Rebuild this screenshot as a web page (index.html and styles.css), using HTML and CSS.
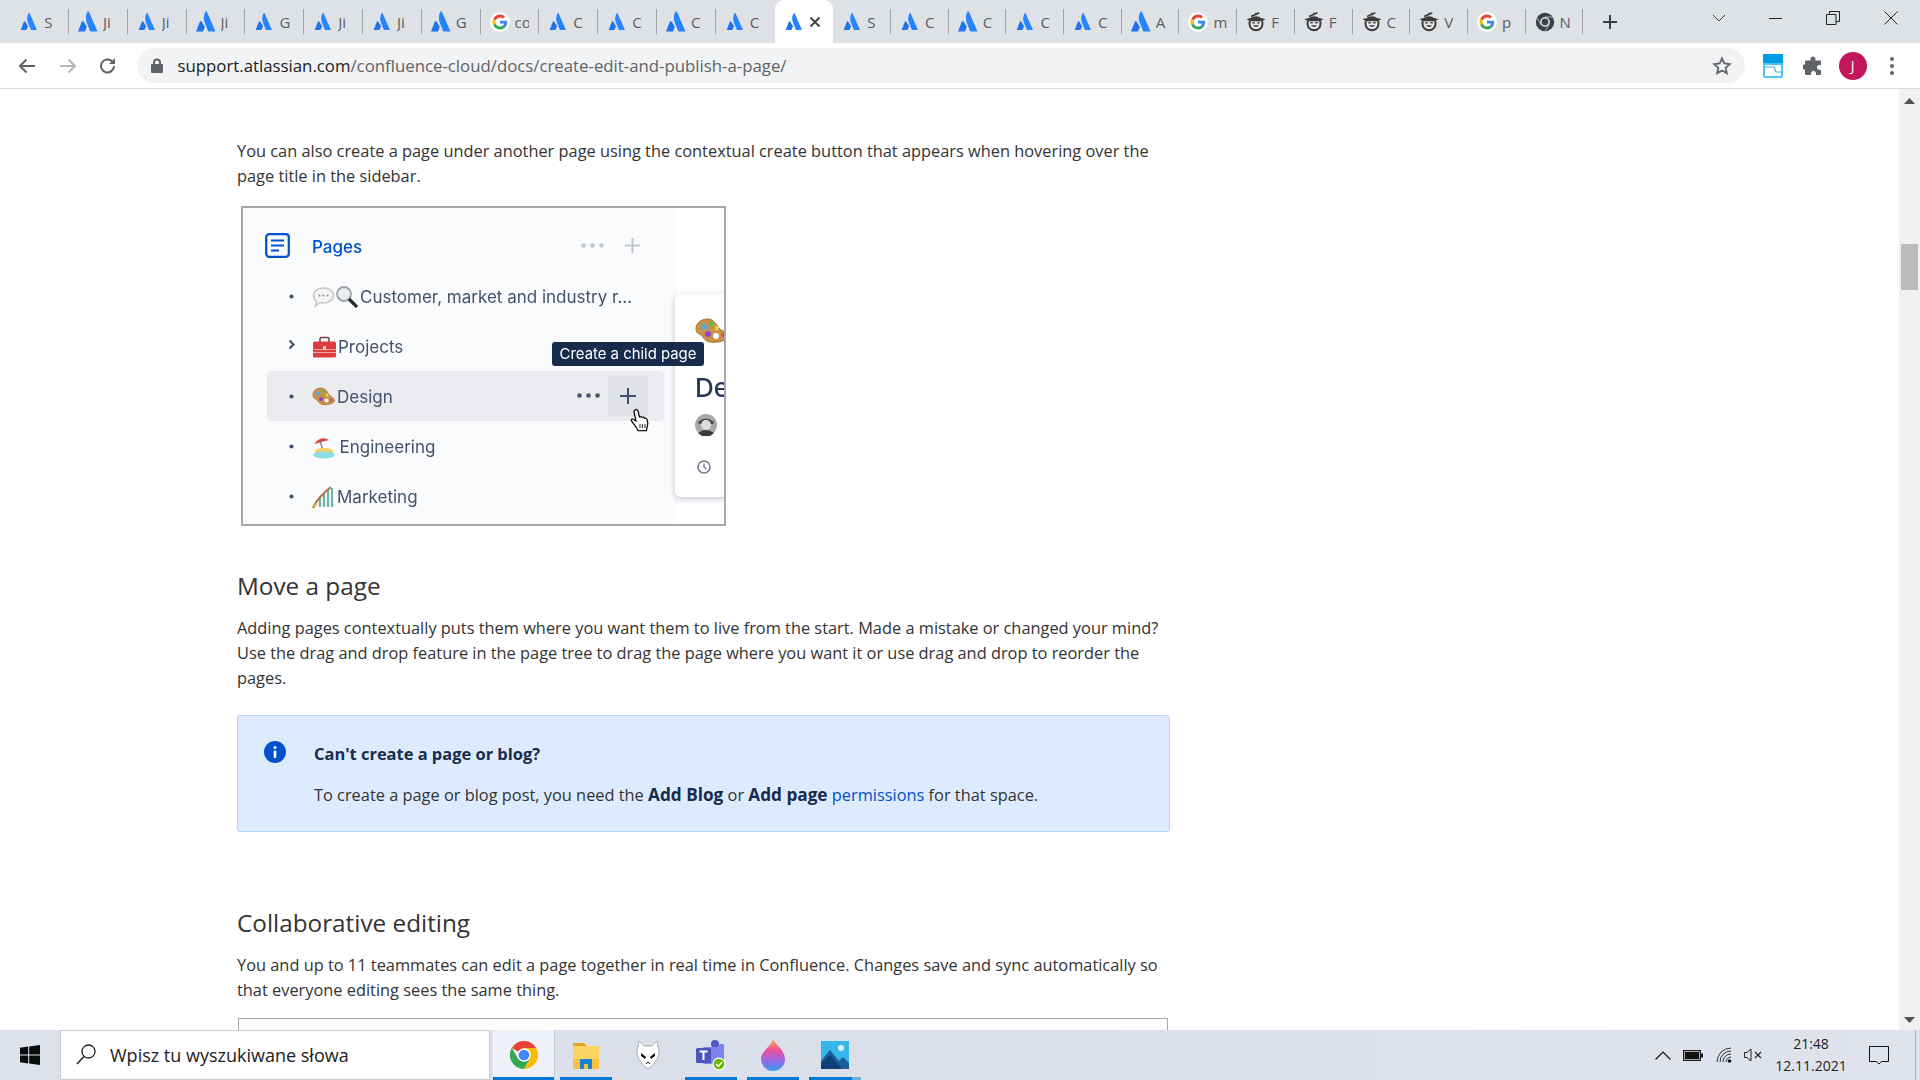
FILE: index.html
```html
<!DOCTYPE html>
<html lang="en">
<head>
<meta charset="utf-8">
<title>Create, edit, and publish a page</title>
<link rel="stylesheet" href="styles.css">
</head>
<body>
<svg class="defs" width="0" height="0" aria-hidden="true">
  <symbol id="atl" viewBox="0 0 24 24">
    <path fill="#2684ff" d="M11.6 1.6c-2.4 4-2.3 8.300-.3 12.500L14.300 21.500h7.200L12.900 1.800c-.4-.7-1-.7-1.300-.2z"/>
    <path fill="#1f74ec" d="M7.200 11.300c-.4-.5-1-.4-1.300.2L2 21.500h7l1.800-4.400c-1-2.100-2.100-4-3.600-5.800z"/>
  </symbol>
  <symbol id="goo" viewBox="-8 -8 64 64">
    <circle cx="24" cy="24" r="32" fill="#fff"/>
    <path fill="#EA4335" d="M24 9.500c3.540 0 6.710 1.220 9.210 3.600l6.850-6.850C35.900 2.380 30.470 0 24 0 14.620 0 6.510 5.380 2.560 13.220l7.980 6.190C12.430 13.720 17.740 9.500 24 9.500z"/>
    <path fill="#4285F4" d="M46.980 24.550c0-1.570-.15-3.090-.38-4.550H24v9.020h12.940c-.58 2.960-2.260 5.480-4.780 7.180l7.730 6c4.510-4.180 7.090-10.360 7.090-17.650z"/>
    <path fill="#FBBC05" d="M10.530 28.590c-.48-1.450-.76-2.990-.76-4.590s.27-3.140.76-4.590l-7.980-6.190C.92 16.460 0 20.120 0 24c0 3.880.92 7.540 2.560 10.780l7.970-6.190z"/>
    <path fill="#34A853" d="M24 48c6.480 0 11.930-2.130 15.890-5.810l-7.730-6c-2.150 1.450-4.920 2.300-8.160 2.300-6.260 0-11.570-4.220-13.470-9.910l-7.980 6.190C6.510 42.620 14.620 48 24 48z"/>
  </symbol>
  <symbol id="hat" viewBox="0 0 24 24">
    <circle cx="12" cy="14" r="9" fill="#3c3c3c"/>
    <path d="M1 8.500c7-2.500 15-2.500 22 0-1 1.500-2 1.700-3 1.700H4c-1 0-2-.2-3-1.700z" fill="#3c3c3c"/>
    <path d="M6 5.500L16 1M12 4V1" stroke="#3c3c3c" stroke-width="2" fill="none"/>
    <path d="M5.500 11h13v3c0 4-3 6.500-6.500 6.500S5.500 18 5.500 14z" fill="#e9e9e9"/>
    <path d="M7.500 13.500q1.500-1.500 3 0M13.500 13.500q1.500-1.500 3 0" stroke="#3c3c3c" stroke-width="1.300" fill="none"/>
    <path d="M8 16q4 4 8 0z" fill="#3c3c3c"/>
  </symbol>
  <symbol id="chr" viewBox="0 0 24 24">
    <circle cx="12" cy="12" r="11" fill="#3c4043"/>
    <circle cx="12" cy="12" r="6" fill="#c9ccd1"/>
    <circle cx="12" cy="12" r="3.800" fill="#3c4043"/>
    <path d="M12 6h9.500M7 15L2.500 7M17 15l-5 8" stroke="#c9ccd1" stroke-width="1"/>
  </symbol>
  <symbol id="bullet" viewBox="0 0 6 6"><circle cx="3" cy="3" r="2.500" fill="#42526e"/></symbol>
</svg>

<div class="tabstrip">
  <div class="tab"><div class="tab-in"><svg class="fav"><use href="#atl"/></svg><span class="let">S</span></div></div>
  <div class="tab"><div class="tab-in"><svg class="fav big"><use href="#atl"/></svg><span class="let">Ji</span></div></div>
  <div class="tab"><div class="tab-in"><svg class="fav"><use href="#atl"/></svg><span class="let">Ji</span></div></div>
  <div class="tab"><div class="tab-in"><svg class="fav big"><use href="#atl"/></svg><span class="let">Ji</span></div></div>
  <div class="tab"><div class="tab-in"><svg class="fav"><use href="#atl"/></svg><span class="let">G</span></div></div>
  <div class="tab"><div class="tab-in"><svg class="fav"><use href="#atl"/></svg><span class="let">Ji</span></div></div>
  <div class="tab"><div class="tab-in"><svg class="fav"><use href="#atl"/></svg><span class="let">Ji</span></div></div>
  <div class="tab"><div class="tab-in"><svg class="fav big"><use href="#atl"/></svg><span class="let">G</span></div></div>
  <div class="tab"><div class="tab-in"><svg class="fav"><use href="#goo"/></svg><span class="let">co</span></div></div>
  <div class="tab"><div class="tab-in"><svg class="fav"><use href="#atl"/></svg><span class="let">C</span></div></div>
  <div class="tab"><div class="tab-in"><svg class="fav"><use href="#atl"/></svg><span class="let">C</span></div></div>
  <div class="tab"><div class="tab-in"><svg class="fav big"><use href="#atl"/></svg><span class="let">C</span></div></div>
  <div class="tab"><div class="tab-in no-sep"><svg class="fav"><use href="#atl"/></svg><span class="let">C</span></div></div>
  <div class="tab active"><div class="tab-in no-sep"><svg class="fav"><use href="#atl"/></svg>
    <svg class="tab-x" viewBox="0 0 12 12"><path d="M1.500 1.500l9 9M10.500 1.500l-9 9" stroke="#3c4043" stroke-width="1.800"/></svg></div></div>
  <div class="tab"><div class="tab-in"><svg class="fav"><use href="#atl"/></svg><span class="let">S</span></div></div>
  <div class="tab"><div class="tab-in"><svg class="fav"><use href="#atl"/></svg><span class="let">C</span></div></div>
  <div class="tab"><div class="tab-in"><svg class="fav big"><use href="#atl"/></svg><span class="let">C</span></div></div>
  <div class="tab"><div class="tab-in"><svg class="fav"><use href="#atl"/></svg><span class="let">C</span></div></div>
  <div class="tab"><div class="tab-in"><svg class="fav"><use href="#atl"/></svg><span class="let">C</span></div></div>
  <div class="tab"><div class="tab-in"><svg class="fav big"><use href="#atl"/></svg><span class="let">A</span></div></div>
  <div class="tab"><div class="tab-in"><svg class="fav"><use href="#goo"/></svg><span class="let">m</span></div></div>
  <div class="tab"><div class="tab-in"><svg class="fav"><use href="#hat"/></svg><span class="let">F</span></div></div>
  <div class="tab"><div class="tab-in"><svg class="fav"><use href="#hat"/></svg><span class="let">F</span></div></div>
  <div class="tab"><div class="tab-in"><svg class="fav"><use href="#hat"/></svg><span class="let">C</span></div></div>
  <div class="tab"><div class="tab-in"><svg class="fav"><use href="#hat"/></svg><span class="let">V</span></div></div>
  <div class="tab"><div class="tab-in"><svg class="fav"><use href="#goo"/></svg><span class="let">p</span></div></div>
  <div class="tab"><div class="tab-in"><svg class="fav"><use href="#chr"/></svg><span class="let">N</span></div></div>
  <svg class="newtab" viewBox="0 0 14 14"><path d="M7 0v14M0 7h14" stroke="#3c4043" stroke-width="2"/></svg>
  <div class="win-btns">
    <div class="win chev"><svg width="14" height="8" viewBox="0 0 14 8"><path d="M1 1l6 6 6-6" fill="none" stroke="#3c4043" stroke-width="1"/></svg></div>
    <div class="win"><svg width="16" height="14" viewBox="0 0 16 14"><path d="M2 7.500h13" stroke="#222" stroke-width="1"/></svg></div>
    <div class="win"><svg width="14" height="14" viewBox="0 0 14 14"><path d="M.5 3.500h9.500v10H.5zM3.500 3.500V.5h10v10H10" fill="none" stroke="#222" stroke-width="1"/></svg></div>
    <div class="win"><svg width="14" height="14" viewBox="0 0 14 14"><path d="M.5.5l13 13M13.500.5l-13 13" stroke="#222" stroke-width="1"/></svg></div>
  </div>
</div>

<div class="toolbar">
  <div class="tb-btn"><svg width="18" height="16" viewBox="0 0 18 16"><path d="M17 8H2M8.500 1.500L2 8l6.500 6.500" fill="none" stroke="#5f6368" stroke-width="2"/></svg></div>
  <div class="tb-btn"><svg width="18" height="16" viewBox="0 0 18 16"><path d="M1 8h15M9.500 1.500L16 8l-6.500 6.500" fill="none" stroke="#b4b6b9" stroke-width="2"/></svg></div>
  <div class="tb-btn"><svg width="18" height="18" viewBox="0 0 18 18"><path d="M15 9a6.500 6.500 0 1 1-1.900-4.600" fill="none" stroke="#5f6368" stroke-width="2"/><path d="M16 1v6h-6z" fill="#5f6368"/></svg></div>
  <div class="omnibox">
    <svg class="lock" width="12" height="15" viewBox="0 0 12 15"><path d="M2 6V4.500a4 4 0 0 1 8 0V6h1a1 1 0 0 1 1 1v7a1 1 0 0 1-1 1H1a1 1 0 0 1-1-1V7a1 1 0 0 1 1-1zm2 0h4V4.500a2 2 0 0 0-4 0z" fill="#5f6368"/></svg>
    <span class="url"><span class="host">support.atlassian.com</span>/confluence-cloud/docs/create-edit-and-publish-a-page/</span>
    <svg class="star" width="20" height="20" viewBox="0 0 20 20"><path d="M10 2.500l2.300 5 5.400.6-4 3.700 1.100 5.400L10 14.500l-4.800 2.700 1.100-5.400-4-3.700 5.400-.6z" fill="none" stroke="#5f6368" stroke-width="1.800"/></svg>
  </div>
  <div class="tb-btn ext"><svg width="20" height="24" viewBox="0 0 20 24"><rect width="20" height="24" rx="2" fill="#4fc3f7"/><rect width="20" height="9" y="0" fill="#039be5"/><rect x="2" y="11" width="16" height="11" fill="#fff"/><path d="M2 13h9l2 5h5" fill="none" stroke="#4fa8d8" stroke-width="1.200"/></svg></div>
  <div class="tb-btn"><svg width="20" height="20" viewBox="0 0 20 20"><path d="M8 1.500a2.500 2.500 0 0 1 4.500 1.500V4.500H17a1 1 0 0 1 1 1V9h-1.500a2.500 2.500 0 0 0 0 5H18v4a1 1 0 0 1-1 1h-4v-1.500a2.500 2.500 0 0 0-5 0V19H3a1 1 0 0 1-1-1v-4.500H.5a2.500 2.500 0 0 1 0-5H2V5.500a1 1 0 0 1 1-1h4.500V3A2 2 0 0 1 8 1.500z" fill="#5f6368"/></svg></div>
  <div class="tb-btn narrow"><span class="avatar">J</span></div>
  <div class="tb-btn narrow"><svg width="4" height="18" viewBox="0 0 4 18"><circle cx="2" cy="2" r="2" fill="#5f6368"/><circle cx="2" cy="9" r="2" fill="#5f6368"/><circle cx="2" cy="16" r="2" fill="#5f6368"/></svg></div>
</div>

<div class="viewport">
  <main class="page">
    <p class="para">You can also create a page under another page using the contextual create button that appears when hovering over the page title in the sidebar.</p>

    <div class="shot">
      <div class="shot-in">
        <div class="side">
          <div class="row">
            <svg class="pages-ico" width="25" height="25" viewBox="0 0 25 25"><rect x="1.200" y="1.200" width="22.600" height="22.600" rx="3" fill="none" stroke="#0052cc" stroke-width="2.200"/><path d="M6 7.500h13M6 12.500h13M6 17.500h8" stroke="#0052cc" stroke-width="2"/></svg>
            <span class="pages-label">Pages</span>
            <svg class="dots" width="23" height="5" viewBox="0 0 23 5"><circle cx="2.500" cy="2.500" r="2.300" fill="#c1c7d0"/><circle cx="11.500" cy="2.500" r="2.300" fill="#c1c7d0"/><circle cx="20.500" cy="2.500" r="2.300" fill="#c1c7d0"/></svg>
            <div class="plus-slot"><svg width="15" height="15" viewBox="0 0 15 15"><path d="M7.500 0v15M0 7.500h15" stroke="#c1c7d0" stroke-width="2"/></svg></div>
          </div>
          <div class="row item">
            <svg class="bul" width="5" height="5"><use href="#bullet"/></svg>
            <svg class="emo" width="23" height="22" viewBox="0 0 23 22"><path d="M11.500 2c5.500 0 10 3 10 7.500S17 17 11.500 17c-1.200 0-2.400-.2-3.500-.5L3.500 20l1-5C2.500 13.500 1.500 11.700 1.500 9.500 1.500 5 6 2 11.500 2z" fill="#f4f5f5" stroke="#c5c9c9" stroke-width="1.500"/><circle cx="7.500" cy="9.500" r="1" fill="#8c9095"/><circle cx="11.500" cy="9.500" r="1" fill="#8c9095"/><circle cx="15.500" cy="9.500" r="1" fill="#8c9095"/></svg>
            <svg class="emo" width="23" height="22" viewBox="0 0 23 22"><circle cx="9" cy="8" r="7" fill="#e9eef2" stroke="#9aa0a6" stroke-width="1.800"/><path d="M14 13l8 8" stroke="#2b2b2b" stroke-width="3.200"/></svg>
            <span class="item-t">Customer, market and industry r...</span>
          </div>
          <div class="row item">
            <svg class="arrow" width="8" height="11" viewBox="0 0 8 11"><path d="M1.500 1.500l4 4-4 4" fill="none" stroke="#42526e" stroke-width="2.200"/></svg>
            <svg class="emo" width="23" height="22" viewBox="0 0 23 22"><path d="M7 6V3a1.500 1.500 0 0 1 1.500-1.500h6A1.500 1.500 0 0 1 16 3v3" fill="none" stroke="#70474a" stroke-width="1.600"/><rect y="5.500" width="23" height="16" rx="1.500" fill="#dc3d3f"/><path d="M0 13.500h23M0 16.500h23" stroke="#f0a8a8" stroke-width="1"/><rect x="10" y="10" width="3" height="4" fill="#e8c9c9"/></svg>
            <span class="item-t">Projects</span>
          </div>
          <div class="row item hover">
            <svg class="bul" width="5" height="5"><use href="#bullet"/></svg>
            <svg class="emo" width="23" height="22" viewBox="0 0 23 22"><path d="M9 2C4 2 1 5 1 9c0 3 2 3.500 3.500 4.500S7 18 11 18.500c5 .6 11.500-1 11.500-4S18.500 11 16.500 8 13 2 9 2z" fill="#c9914a" stroke="#a66e2c" stroke-width=".8"/><circle cx="6" cy="7.500" r="2" fill="#55a8e0"/><circle cx="11" cy="5.500" r="1.800" fill="#63b84a"/><circle cx="15" cy="9" r="1.600" fill="#e9d34b"/><circle cx="9" cy="13" r="2" fill="#8d45c9"/><circle cx="14.500" cy="14.500" r="2" fill="#fff"/><circle cx="19" cy="14" r="1.500" fill="#e05040"/></svg>
            <span class="item-t">Design</span>
            <svg class="dots dark" width="23" height="5" viewBox="0 0 23 5"><circle cx="2.500" cy="2.500" r="2.300" fill="#42526e"/><circle cx="11.500" cy="2.500" r="2.300" fill="#42526e"/><circle cx="20.500" cy="2.500" r="2.300" fill="#42526e"/></svg>
            <div class="plus-box"><svg width="16" height="16" viewBox="0 0 16 16"><path d="M8 0v16M0 8h16" stroke="#42526e" stroke-width="2"/></svg></div>
          </div>
          <div class="row item">
            <svg class="bul" width="5" height="5"><use href="#bullet"/></svg>
            <svg class="emo wide" width="23" height="24" viewBox="0 0 23 24"><path d="M2 9Q9 0 17 5z" fill="#e2443a"/><path d="M8 5L11 16" stroke="#777" stroke-width="1.200"/><ellipse cx="12" cy="16.500" rx="9.500" ry="3.500" fill="#f5cf6a"/><ellipse cx="12" cy="20" rx="11" ry="3.500" fill="#8adfe6"/></svg>
            <span class="item-t">Engineering</span>
          </div>
          <div class="row item">
            <svg class="bul" width="5" height="5"><use href="#bullet"/></svg>
            <svg class="emo" width="23" height="24" viewBox="0 0 23 24"><path d="M8 22V13M12 22V9M16 22V5M20 22V3" stroke="#6cb5a9" stroke-width="2.200"/><path d="M1 23Q6 12 19 2" fill="none" stroke="#b0713d" stroke-width="2.200"/><path d="M2 22l3-4" stroke="#d9c54a" stroke-width="2"/></svg>
            <span class="item-t">Marketing</span>
          </div>
        </div>
        <div class="rhs">
          <div class="card">
            <svg class="card-palette" width="34" height="27" viewBox="0 0 34 27"><path d="M13 1C6 1 1 5 1 11c0 4 3 5 5 6s3 6 9 7c7 1 18-1 18-6s-6-4-9-8-6-9-11-9z" fill="#c9914a" stroke="#a66e2c"/><circle cx="9" cy="9" r="3" fill="#55a8e0"/><circle cx="16" cy="6" r="2.600" fill="#63b84a"/><circle cx="22" cy="10" r="2.200" fill="#e9d34b"/><circle cx="13" cy="16" r="3" fill="#8d45c9"/><circle cx="21" cy="18" r="3" fill="#fff"/><circle cx="28" cy="17" r="2.200" fill="#e05040"/></svg>
            <span class="card-de">De</span>
            <svg class="card-av" width="22" height="22" viewBox="0 0 22 22"><circle cx="11" cy="11" r="11" fill="#a8a8a8"/><path d="M3 8q8-7 16 0l-1 2H4z" fill="#4a4a4a"/><circle cx="11" cy="11" r="5" fill="#dcdcdc"/><path d="M3 19q8-6 16 0l-4 3H7z" fill="#3a3a3a"/></svg>
            <svg class="card-clock" width="14" height="14" viewBox="0 0 14 14"><circle cx="7" cy="7" r="6" fill="none" stroke="#6b778c" stroke-width="1.500"/><path d="M7 3.500V7l2.500 2" fill="none" stroke="#6b778c" stroke-width="1.300"/></svg>
          </div>
        </div>
        <div class="tooltip">Create a child page</div>
        <svg class="hand" width="20" height="25" viewBox="0 0 20 25"><path d="M5 2c1-1 2.500-.5 3 1l1.500 6c1-.5 2-.5 2.500.5 1-.5 2-.3 2.500.7 1-.3 2 0 2.500 1 .8 2 1 5 .3 7.500l-1 4H8L6 19 1.500 13c-.8-1.500.8-2.500 2-1.500L6 13 4 4c-.2-.8.300-1.500 1-2z" fill="#fff" stroke="#111" stroke-width="1.300"/><path d="M10 16v4M12.500 16v4M15 16v4" stroke="#333" stroke-width="1.100"/></svg>
      </div>
    </div>

    <h2 class="h-move">Move a page</h2>
    <p class="para">Adding pages contextually puts them where you want them to live from the start. Made a mistake or changed your mind? Use the drag and drop feature in the page tree to drag the page where you want it or use drag and drop to reorder the pages.</p>

    <section class="callout">
      <svg class="info" width="22" height="22" viewBox="0 0 22 22"><circle cx="11" cy="11" r="11" fill="#0052cc"/><circle cx="11" cy="6.500" r="1.500" fill="#fff"/><rect x="9.700" y="9.500" width="2.600" height="7.500" rx="1" fill="#fff"/></svg>
      <div class="callout-body">
        <h3 class="callout-h">Can't create a page or blog?</h3>
        <p class="callout-p">To create a page or blog post, you need the <strong>Add Blog</strong> or <strong>Add page</strong> <a class="link">permissions</a> for that space.</p>
      </div>
    </section>

    <h2 class="h-collab">Collaborative editing</h2>
    <p class="para">You and up to 11 teammates can edit a page together in real time in Confluence. Changes save and sync automatically so that everyone editing sees the same thing.</p>
    <div class="shot2"></div>
  </main>
  <div class="scrollbar">
    <svg class="sb-up" width="11" height="6" viewBox="0 0 11 6"><path d="M5.500 0L11 6H0z" fill="#505050"/></svg>
    <div class="sb-thumb"></div>
    <svg class="sb-down" width="11" height="6" viewBox="0 0 11 6"><path d="M5.500 6L11 0H0z" fill="#505050"/></svg>
  </div>
</div>

<div class="taskbar">
  <div class="start"><svg width="20" height="20" viewBox="0 0 20 20"><path d="M0 2.800l8.200-1.200v7.900H0zM9.200 1.400L20 0v9.500H9.200zM0 10.500h8.200v7.900L0 17.200zM9.200 10.500H20V20L9.200 18.600z" fill="#0a0a0a"/></svg></div>
  <div class="search">
    <svg width="22" height="24" viewBox="0 0 22 24"><circle cx="13.500" cy="8.500" r="6.500" fill="none" stroke="#222" stroke-width="1.300"/><path d="M9 13.500L2 21" stroke="#222" stroke-width="1.500"/></svg>
    <span class="search-t">Wpisz tu wyszukiwane słowa</span>
  </div>
  <div class="apps">
    <div class="app on">
      <svg width="28" height="28" viewBox="0 0 24 24"><path fill="#ea4335" d="M12 12L1.600 6A12 12 0 0 1 22.400 6H12z"/><path fill="#34a853" d="M1.600 6A12 12 0 0 0 12 24L17.200 15H6.800z"/><path fill="#fbbc05" d="M22.400 6A12 12 0 0 1 12 24L17.200 15 12 6z"/><circle cx="12" cy="12" r="5.800" fill="#fff"/><circle cx="12" cy="12" r="4.600" fill="#4285f4"/></svg>
      <i class="bar full"></i>
    </div>
    <div class="app">
      <svg width="28" height="30" viewBox="0 0 28 30"><path d="M1 3h11l3 3H1z" fill="#e0a41f"/><rect x="1" y="6" width="26" height="23" fill="#fcd462"/><rect x="1" y="19" width="26" height="10" fill="#f5c242"/><path d="M8 29v-9a1 1 0 0 1 1-1h10a1 1 0 0 1 1 1v9h-4v-5h-4v5z" fill="#1b7fd1"/></svg>
      <i class="bar"></i>
    </div>
    <div class="app">
      <svg width="24" height="30" viewBox="0 0 24 30"><path d="M3 1l5 5h8l5-5 2 9c1 7-5 15-11 19C6 25 0 17 1 10z" fill="#fff" stroke="#9a9a9a" stroke-width=".8"/><path d="M5 13l5 4-1 2-4-3zM19 13l-5 4 1 2 4-3z" fill="#111"/><path d="M10 24l2-2 2 2" stroke="#111" fill="none"/></svg>
      <i class="bar none"></i>
    </div>
    <div class="app">
      <svg width="30" height="32" viewBox="0 0 30 32"><circle cx="19" cy="5" r="4" fill="#5059c9"/><circle cx="25.500" cy="7.500" r="2.800" fill="#7b83eb"/><rect x="6" y="8" width="22" height="17" rx="3" fill="#7b83eb"/><rect y="9" width="15" height="15" rx="1.500" fill="#4b53bc"/><path d="M3.500 12.500h8M7.500 12.500v8.500" stroke="#fff" stroke-width="2"/><circle cx="23" cy="25" r="6.500" fill="#fff"/><circle cx="23" cy="25" r="5.300" fill="#6bb700"/><path d="M20 25l2.300 2.300 3.700-4" fill="none" stroke="#fff" stroke-width="1.500"/></svg>
      <i class="bar"></i>
    </div>
    <div class="app">
      <svg width="28" height="32" viewBox="0 0 28 32"><defs><linearGradient id="flame" x1="0" y1="0" x2="0" y2="1"><stop offset="0" stop-color="#f7b733"/><stop offset=".35" stop-color="#ec4fa0"/><stop offset=".7" stop-color="#8e6ae8"/><stop offset="1" stop-color="#3aa0e8"/></linearGradient></defs><path d="M14 0c2 5 12 11 12 20a12 12 0 0 1-24 0C2 12 12 8 14 0z" fill="url(#flame)"/></svg>
      <i class="bar"></i>
    </div>
    <div class="app">
      <svg width="28" height="28" viewBox="0 0 28 28"><rect width="28" height="28" fill="#35b7ea"/><circle cx="20" cy="7" r="3" fill="#d8f3fc"/><path d="M0 20l9-11 9 11 4-4 6 6v6H0z" fill="#1b5e9e"/><path d="M0 28v-6l9-8 12 14z" fill="#0f3f75"/></svg>
      <i class="bar part"></i>
    </div>
  </div>
  <div class="tray">
    <div class="tray-i w30"><svg width="16" height="9" viewBox="0 0 16 9"><path d="M.5 8.500L8 1l7.500 7.500" fill="none" stroke="#111" stroke-width="1.200"/></svg></div>
    <div class="tray-i w30"><svg width="20" height="11" viewBox="0 0 20 11"><rect x=".7" y=".7" width="16.600" height="9.600" fill="#fff" stroke="#111" stroke-width="1.300"/><rect x="2" y="2" width="14" height="7" fill="#111"/><rect x="18" y="3.500" width="2" height="4" fill="#111"/></svg></div>
    <div class="tray-i w31"><svg width="16" height="16" viewBox="0 0 16 16"><path d="M1 15A14 14 0 0 1 15 1M4 15A11 11 0 0 1 15 4M7 15a8 8 0 0 1 8-8M10 15a5 5 0 0 1 5-5" fill="none" stroke="#333" stroke-width="1"/><circle cx="13.500" cy="14" r="1.800" fill="#111"/></svg></div>
    <div class="tray-i w28"><svg width="18" height="14" viewBox="0 0 18 14"><path d="M.5 4.500h2.500L7 1v12L3 9.500H.5z" fill="none" stroke="#222" stroke-width="1"/><path d="M11 4l6 6M17 4l-6 6" stroke="#222" stroke-width="1.100"/></svg></div>
    <div class="clock"><span>21:48</span><span>12.11.2021</span></div>
    <div class="tray-i w48"><svg width="20" height="19" viewBox="0 0 20 19"><path d="M.5.500h19v15h-7L10 18l-2.500-2.500h-7z" fill="none" stroke="#111" stroke-width="1"/></svg></div>
    <div class="desk"></div>
  </div>
</div>
</body>
</html>
```

FILE: styles.css
```css
* { box-sizing: border-box; }
html, body { margin: 0; height: 100%; overflow: hidden; }
body {
  display: flex;
  flex-direction: column;
  width: 1920px;
  height: 1080px;
  font-family: "Open Sans", "Liberation Sans", sans-serif;
  color: #333;
  background: #fff;
}
.defs { position: absolute; }

/* tab strip */
.tabstrip {
  display: flex;
  align-items: stretch;
  height: 43px;
  flex: none;
  padding-left: 10.200px;
  background: #dee1e6;
}
.tab {
  width: 58.800px;
  flex: none;
  display: flex;
  align-items: center;
}
.tab.active ~ .tab { width: 57.700px; }
.tab-in {
  width: 100%;
  height: 25px;
  display: flex;
  align-items: center;
  gap: 5px;
  padding-left: 9px;
  overflow: hidden;
  border-right: 1px solid #a0a2a6;
}
.tab-in.no-sep { border-right: 0; }
.tab.active { background: #fff; border-radius: 9px 9px 0 0; }
.fav { width: 20px; height: 20px; flex: none; }
.fav.big { width: 24px; height: 24px; margin-left: -2px; margin-right: -2px; }
.let { font-size: 15px; color: #5a5d61; width: 14px; overflow: hidden; white-space: nowrap; }
.tab-x { width: 12px; height: 12px; flex: none; }
.newtab { width: 14px; height: 14px; margin: auto 0 auto 20px; flex: none; }
.win-btns { display: flex; margin-left: auto; height: 36px; }
.win { width: 58px; display: flex; align-items: center; justify-content: center; }
.win.chev { width: 40px; margin-right: 7px; }

/* toolbar */
.toolbar {
  display: flex;
  align-items: center;
  height: 46px;
  flex: none;
  padding: 0 8px 0 7px;
  background: #fff;
  border-bottom: 1px solid #dadce0;
}
.tb-btn { width: 40.500px; height: 36px; display: flex; align-items: center; justify-content: center; flex: none; }
.tb-btn.ext { margin-left: 7.500px; width: 40px; }
.tb-btn.narrow { width: 39.500px; }
.omnibox {
  flex: 1;
  height: 35px;
  margin-left: 8px;
  display: flex;
  align-items: center;
  padding: 0 13px 0 14px;
  background: #f1f3f4;
  border-radius: 18px;
}
.lock { flex: none; }
.url { margin-left: 15px; font-size: 16.800px; color: #5f6368; white-space: nowrap; flex: 1; }
.host { color: #202124; }
.star { flex: none; }
.avatar {
  width: 28px; height: 28px; border-radius: 50%;
  background: #c2185b; color: #fff;
  font-size: 14px; display: flex; align-items: center; justify-content: center;
}

/* page */
.viewport { flex: 1; min-height: 0; display: flex; overflow: hidden; background: #fff; }
.page { flex: 1; min-width: 0; padding: 49.500px 0 0 237px; overflow: hidden; }
.para { margin: 0; width: 933px; font-size: 16.380px; line-height: 25.200px; color: #333; }
.shot {
  width: 485px; height: 320px; margin: 17px 0 0 4px;
  border: 2px solid #a8a8a8;
}
.shot-in {
  position: relative;
  display: flex;
  height: 100%;
  font-family: Inter, "Liberation Sans", sans-serif;
  filter: blur(.35px);
  overflow: hidden;
}
.side { width: 434px; flex: none; padding: 13px 0 0 24px; background: #fafbfc; }
.row { height: 50px; width: 397px; display: flex; align-items: center; border-radius: 4px; padding-right: 16px; font-size: 17px; color: #42526e; }
.row.item { padding-left: 20px; }
.pages-ico { margin-left: -2px; flex: none; }
.pages-label { margin: 2px 0 0 22px; color: #0052cc; font-weight: 500; font-size: 17px; }
.dots { margin-left: auto; }
.plus-slot { width: 40px; display: flex; justify-content: center; margin-left: 8px; margin-right: -4px; }
.bul { margin: 2px 18px 0 2px; flex: none; }
.arrow { margin: -2px 17px 0 1px; flex: none; }
.emo { flex: none; margin-top: 2px; }
.item-t { margin: 2px 0 0 2px; white-space: nowrap; }
.emo.wide + .item-t { margin-left: 4.500px; }
.hover { background: #ebecf0; }
.plus-box { width: 40px; height: 40px; margin-left: 8px; border-radius: 3px; background: #dfe1e6; display: flex; align-items: center; justify-content: center; }
.rhs { flex: 1; padding-top: 86px; min-width: 0; background: #fff; }
.card {
  width: 60px; height: 203px; margin-left: -2px;
  padding: 24px 0 0 20px;
  display: flex; flex-direction: column; align-items: flex-start;
  background: #fff;
  border-radius: 6px 0 0 6px;
  box-shadow: 0 2px 6px rgba(9, 30, 66, .25);
}
.card-palette { flex: none; }
.card-de { margin-top: 27px; font-size: 26px; line-height: 32px; color: #253858; font-weight: 500; }
.card-av { margin-top: 10px; flex: none; }
.card-clock { margin: 24px 0 0 2px; flex: none; }
.tooltip {
  position: absolute; left: 309px; top: 134px;
  width: 152px; height: 24px;
  background: #172b4d; color: #fff;
  border-radius: 3px;
  font-size: 14.900px; line-height: 24px; text-align: center;
}
.hand { position: absolute; left: 387px; top: 200px; }

h2 { margin: 0; font-size: 24.300px; line-height: 32px; font-weight: 500; color: #333; }
.h-move { margin-top: 44px; margin-bottom: 14px; }
.callout {
  width: 933px; height: 117px; margin-top: 23px;
  display: flex; gap: 28px;
  padding: 26.500px 0 0 26px;
  background: #deebff;
  border: 1px solid #b3d4ff;
  border-radius: 3px;
}
.info { flex: none; margin-top: -1.500px; }
.callout-h { margin: 0; font-size: 16.450px; line-height: 24px; font-weight: 700; color: #172b4d; }
.callout-p { margin: 16.500px 0 0; font-size: 16.380px; line-height: 24px; color: #333; }
.callout-p strong { color: #172b4d; font-size: 17.200px; }
.link { color: #0052cc; }
.h-collab { margin-top: 75px; margin-bottom: 14px; }
.shot2 { width: 930px; height: 60px; margin: 15px 0 0 1px; border: 1px solid #a8a8a8; }

/* scrollbar */
.scrollbar {
  width: 21px; flex: none;
  display: flex; flex-direction: column; align-items: center;
  background: #f1f1f1;
  padding-top: 9px;
}
.sb-thumb { width: 17px; height: 46px; margin-top: 140px; background: #bcbcbc; }
.sb-down { margin-top: auto; margin-bottom: 7px; }

/* taskbar */
.taskbar {
  display: flex;
  height: 50px;
  flex: none;
  background: linear-gradient(90deg, #dde2ec, #d9dee9 50%, #e0e3ee);
  color: #111;
}
.start { width: 60px; display: flex; align-items: center; justify-content: center; flex: none; }
.search {
  width: 430px; flex: none;
  display: flex; align-items: center; gap: 13px;
  padding-left: 14px;
  background: #fff;
  border: 1px solid #c9ccd2;
}
.search-t { font-size: 18px; color: #222; }
.apps { display: flex; margin-left: 3px; }
.app {
  width: 62.200px; flex: none;
  display: flex; flex-direction: column; align-items: center; justify-content: center;
  position: relative;
}
.app.on { background: #eef1f7; border-right: 1px solid #c8ccd6; }
.bar { position: absolute; left: 5px; right: 5px; bottom: 0; height: 3px; background: #0078d7; }
.bar.full { left: 0; right: 0; }
.bar.none { display: none; }
.bar.part { background: linear-gradient(90deg, #0078d7 82%, #6aaee6 82%); }
.tray { display: flex; margin-left: auto; }
.tray-i { display: flex; align-items: center; justify-content: center; flex: none; }
.w30 { width: 30px; } .w31 { width: 31px; } .w28 { width: 28px; } .w48 { width: 48px; }
.clock { width: 88px; display: flex; flex-direction: column; align-items: center; justify-content: center; font-size: 14px; line-height: 22px; color: #222; }
.desk { border-right: 1px solid #a9adb6; margin-right: 4px; width: 13px; }
```
